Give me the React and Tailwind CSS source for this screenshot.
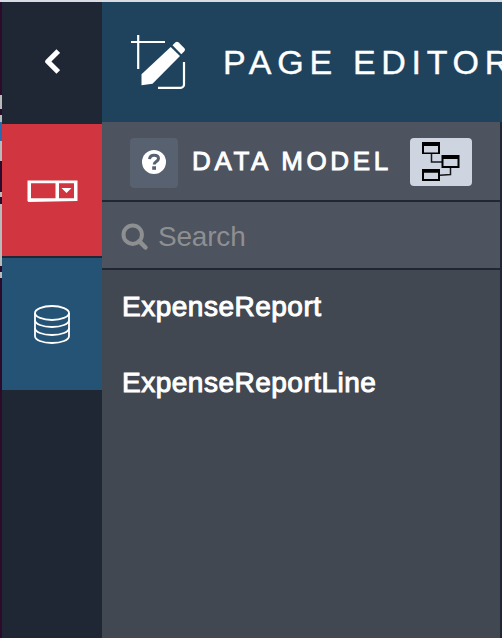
const FONT = "font-['Liberation_Sans',Arial,sans-serif]";

function BackIcon() {
  return (
    <svg width="18" height="28" viewBox="0 0 18 28" fill="none" stroke="#fff" strokeWidth="5.2">
      <path d="M16.300 3 5.800 13.500 16.300 24" strokeLinejoin="round" />
    </svg>
  );
}

function DropdownIcon() {
  return (
    <svg width="52" height="24" viewBox="0 0 52 24">
      <path
        fill="#fff"
        fillRule="evenodd"
        d="M.5 1.500h50v20.500l-49 1L.5 22zM4 4.200v15h24.500v-15zM32 4.200v15h15v-15z"
      />
      <path fill="#fff" d="M34.500 9h10l-5 5z" />
    </svg>
  );
}

function DatabaseIcon() {
  return (
    <svg width="38" height="42" viewBox="0 0 38 42" fill="none" stroke="#fff" strokeWidth="1.8">
      <ellipse cx="19" cy="9" rx="17" ry="7" />
      <path d="M2 9v23c0 4 7.500 7 17 7s17-3 17-7V9" />
      <path d="M2 16c0 4 7.500 7 17 7s17-3 17-7M2 24c0 4 7.500 7 17 7s17-3 17-7" />
    </svg>
  );
}

function PageEditorIcon() {
  return (
    <svg className="shrink-0" width="56" height="56" viewBox="0 0 56 56">
      <g fill="none" stroke="#fff" strokeWidth="2.2">
        <path d="M0 8h34M7.200 1v34" />
        <path d="M53 28v22.500a3.300 3.300 0 0 1-3.300 3.300H27" />
      </g>
      <g fill="#fff">
        <path d="M39.700 13.100 49 22 21.500 49.800l-11 1.500V40.300z" />
        <path d="m41.500 11.300 3-3c1-.9 2.200-.7 3.200.2l5.500 5.500c1 1 1 2.200.1 3.200l-3 3z" />
      </g>
    </svg>
  );
}

function HelpIcon() {
  return (
    <svg width="24" height="24" viewBox="0 0 24 24">
      <circle cx="12" cy="12" r="12" fill="#fff" />
      <path
        d="M7.500 9.200C7.800 6.500 9.500 5.300 12.100 5.300c2.600 0 4.400 1.200 4.400 3.300 0 3-4.300 2.800-4.300 5.800"
        fill="none"
        stroke="#586170"
        strokeWidth="3"
      />
      <path d="M10.200 16.300h3.800v3.500h-3.800z" fill="#586170" />
    </svg>
  );
}

function ModelIcon() {
  return (
    <svg width="38" height="40" viewBox="0 0 38 40">
      <path d="M9.500 12v8H20M28.500 26v6.500L18 33.200" fill="none" stroke="#17181c" strokeWidth="1.500" />
      <path
        fillRule="evenodd"
        d="M0 0h18v12H0zM2 4v6.500h14V4zM19.500 13h18v13h-18zM21.500 17v7h14v-7zM0 27h18v12H0zM2 30.800V37h14v-6.200z"
      />
    </svg>
  );
}

function SearchIcon() {
  return (
    <svg className="shrink-0" width="28" height="28" viewBox="0 0 28 28" fill="none" stroke="#8d8f91">
      <circle cx="11.700" cy="11.700" r="9.200" strokeWidth="4" />
      <path d="m18.200 18.200 6.300 6.300" strokeWidth="4.500" strokeLinecap="round" />
    </svg>
  );
}

const entities = ["ExpenseReport", "ExpenseReportLine"];

export default function App() {
  return (
    <div className={`flex h-[638px] w-[502px] flex-col overflow-hidden bg-[#1f2734] text-white ${FONT}`}>
      <div className="h-[2px] shrink-0 bg-[#d9dde3]" />
      <div className="flex min-h-0 flex-1">
        <div className="flex w-[2px] shrink-0 flex-col bg-[#2c0a2c]">
          <div className="mt-[93px] h-[14px] bg-[#b9bbba]" />
          <div className="mt-[6px] h-[7px] bg-[#b9bbba]" />
          <div className="h-[19px] bg-[#286cb0]" />
          <div className="h-[20px] bg-[#b9bbba]" />
          <div className="mt-[31px] h-[5px] bg-[#b9bbba]" />
          <div className="mt-[7px] h-[62px] bg-[#b9bbba]" />
          <div className="mt-[6px] h-[6px] bg-[#b9bbba]" />
        </div>
        <nav className="flex w-[100px] shrink-0 flex-col bg-[#1f2734]">
          <div className="flex h-[122px] items-center pb-[3px] pl-[40px]">
            <BackIcon />
          </div>
          <div className="flex h-[132px] items-center bg-[#d1353f] pl-[25px] pt-[2px]">
            <DropdownIcon />
          </div>
          <div className="mt-[2px] flex h-[132px] items-center bg-[#245375] pl-[31px] pt-[2px]">
            <DatabaseIcon />
          </div>
        </nav>
        <main className="flex w-[400px] shrink-0 flex-col">
          <header className="flex h-[120px] shrink-0 items-center overflow-hidden bg-[#1f435d] pl-[29px]">
            <PageEditorIcon />
            <h1 className="ml-[36px] whitespace-nowrap text-[34px] leading-10 tracking-[5.7px] [-webkit-text-stroke:0.4px_white]">
              PAGE EDITOR
            </h1>
          </header>
          <section className="flex w-[398px] flex-1 flex-col bg-[#424851]">
            <div className="flex h-[80px] shrink-0 items-start border-b-2 border-[#1f2734] bg-[#4d535f] pl-[28px] pt-[16px]">
              <button className="flex h-[50px] w-[48px] items-center justify-center rounded-[4px] bg-[#586170] pb-[2px]">
                <HelpIcon />
              </button>
              <h2 className="ml-[14px] mt-[7px] w-[218px] whitespace-nowrap text-[26px] leading-8 tracking-[3.6px] [-webkit-text-stroke:0.9px_white]">
                DATA MODEL
              </h2>
              <button className="flex h-[48px] w-[62px] items-center justify-start rounded-[4px] bg-[#ced5e1] pl-[12px]">
                <ModelIcon />
              </button>
            </div>
            <div className="flex h-[66px] shrink-0 items-center bg-[#4d535f] pl-[19px] pt-[4px] text-[#8d8f91]">
              <SearchIcon />
              <span className="ml-[9px] text-[28px] leading-8 tracking-[-0.2px]">Search</span>
            </div>
            <ul className="border-t-2 border-[#1f2734]">
              {entities.map((name) => (
                <li
                  key={name}
                  className="flex h-[76px] items-center pb-[3px] pl-[20px] text-[28px] leading-8 tracking-[0.5px] [-webkit-text-stroke:1px_white]"
                >
                  {name}
                </li>
              ))}
            </ul>
          </section>
        </main>
      </div>
    </div>
  );
}
